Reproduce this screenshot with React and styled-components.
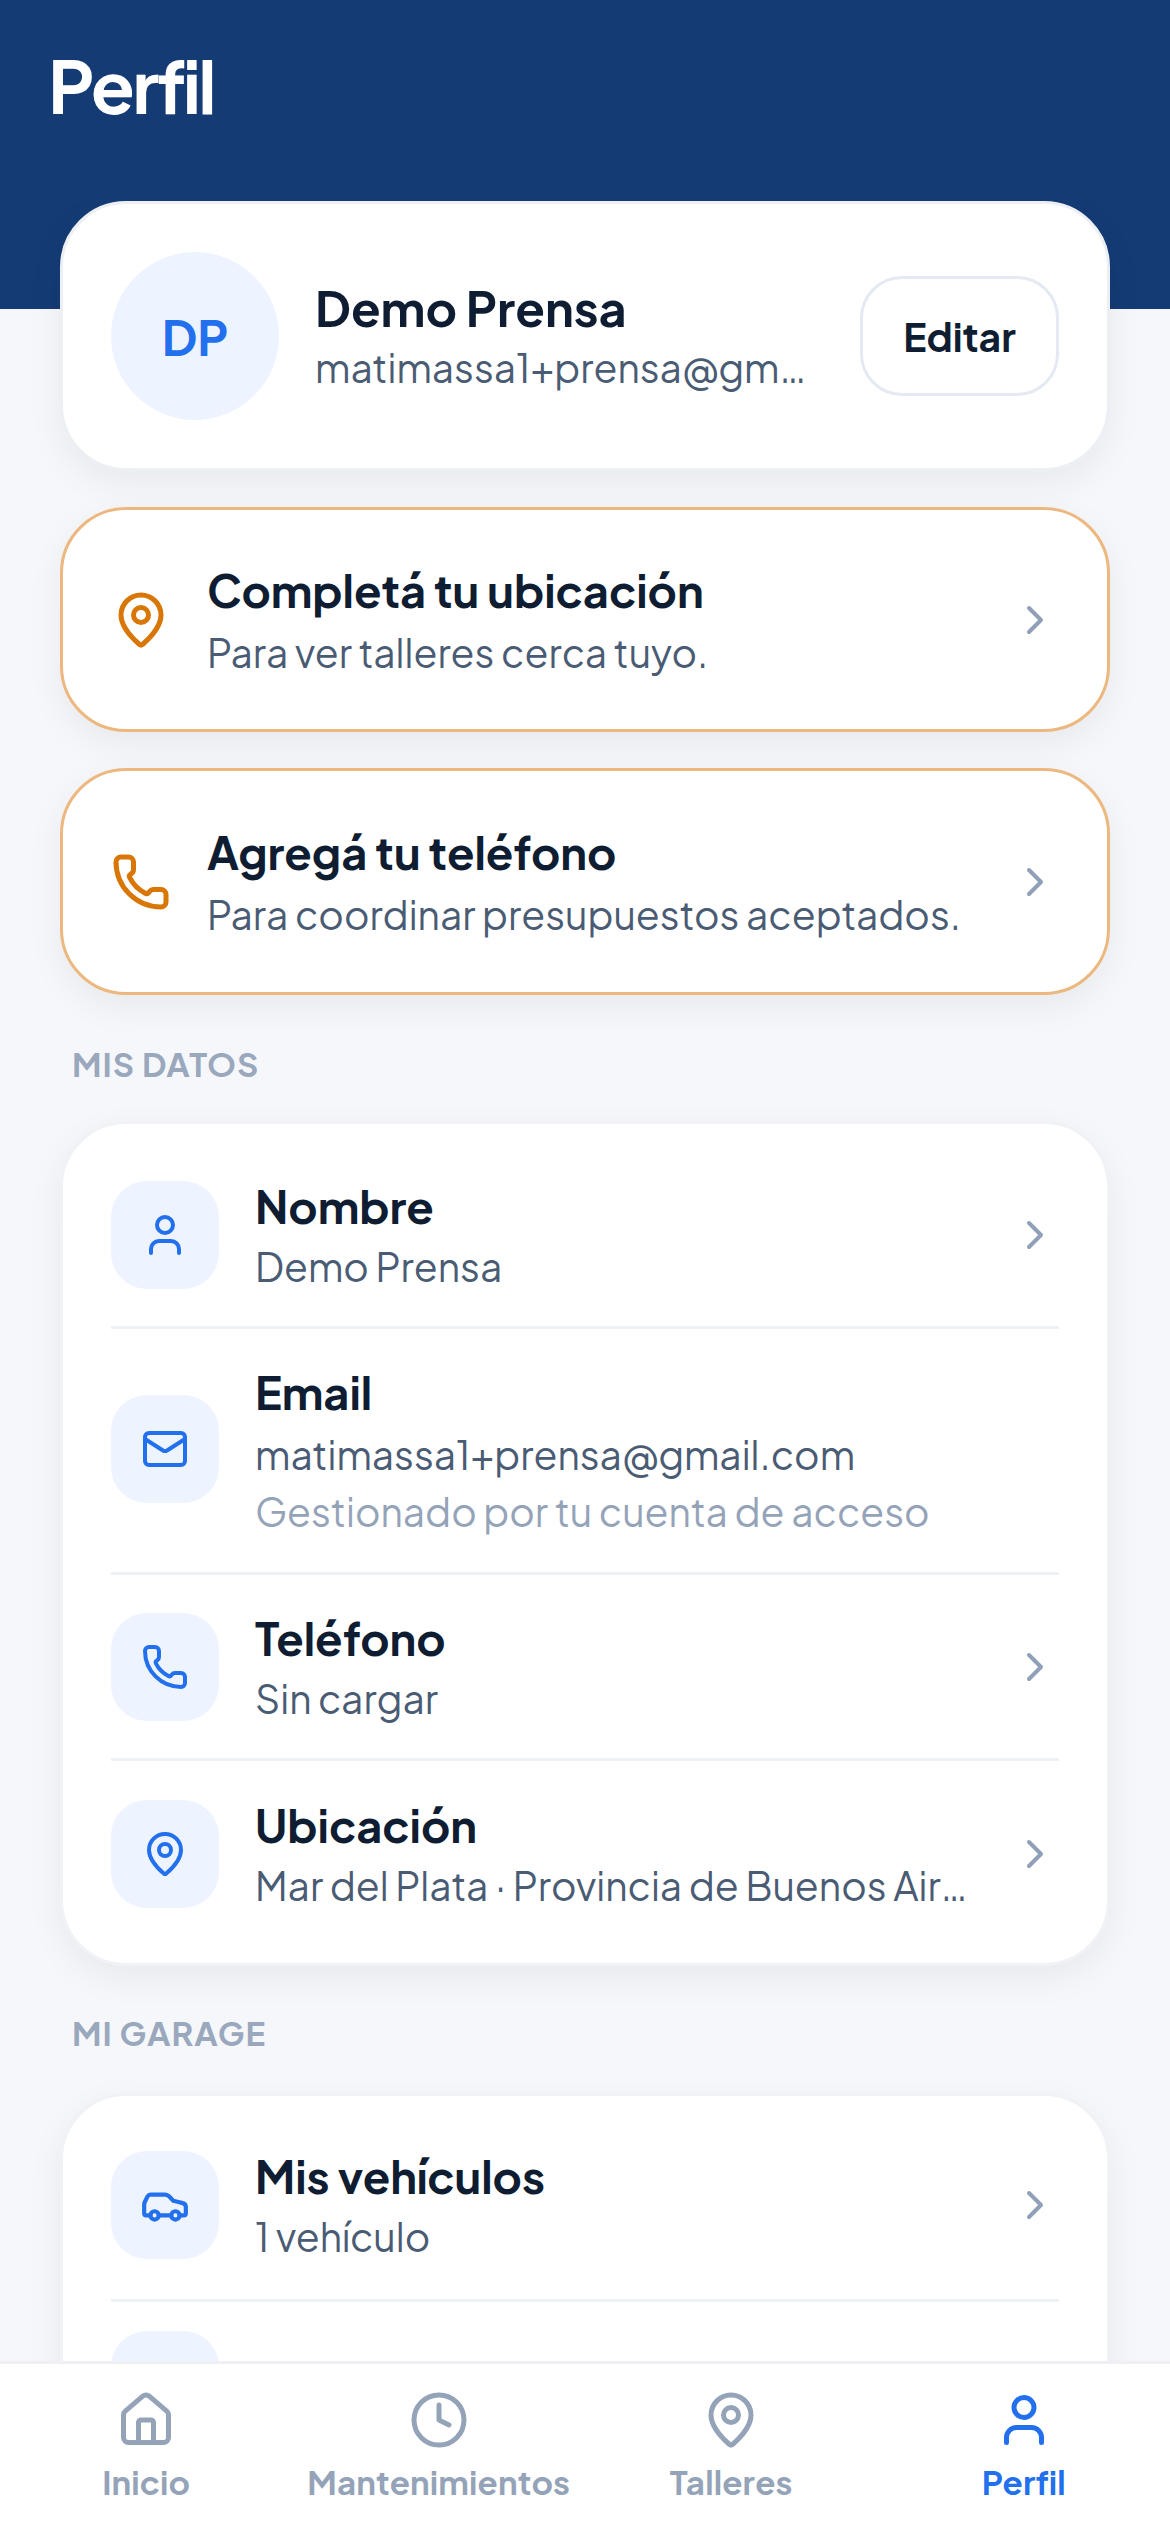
import React from 'react';
import styled, { createGlobalStyle } from 'styled-components';
import { ChevronRight, MapPin, Phone, User, Mail, Car, House, Clock } from 'lucide-react';

const GlobalStyle = createGlobalStyle`
  html, body { margin: 0; padding: 0; background: #f5f7fa; }
  body { font-family: "Plus Jakarta Sans", Inter, "Noto Sans", sans-serif; }
`;

const Screen = styled.div`
  position: relative;
  width: 1170px;
  height: 2532px;
  overflow: hidden;
  background: #f5f7fa;
  display: flex;
  flex-direction: column;
`;

const Hero = styled.header`
  height: 309px;
  flex: none;
  background: #153b75;
  padding: 42px 48px 0;
  box-sizing: border-box;
`;

const Title = styled.h1`
  margin: 0;
  font-size: 72px;
  line-height: 86px;
  font-weight: 700;
  letter-spacing: -2.5px;
  color: #fff;
`;

const Content = styled.main`
  flex: 1;
  min-height: 0;
  margin-top: -108px;
  padding: 0 60px;
  display: flex;
  flex-direction: column;
  overflow: hidden;
`;

const Card = styled.section`
  flex: none;
  background: #fff;
  border: 3px solid ${p => p.$accent ? '#ecb87f' : '#eceff4'};
  border-radius: 66px;
  box-shadow: 0 12px 36px rgba(15, 23, 42, 0.06);
`;

const ProfileCard = styled(Card)`
  height: 270px;
  box-sizing: border-box;
  padding: 0 48px;
  display: flex;
  align-items: center;
  gap: 36px;
  margin-bottom: 36px;
`;

const Avatar = styled.div`
  flex: none;
  width: 168px;
  height: 168px;
  border-radius: 50%;
  background: #edf3ff;
  color: #2270ed;
  display: flex;
  align-items: center;
  justify-content: center;
  font-size: 48px;
  font-weight: 700;
`;

const Info = styled.div`
  flex: 1;
  min-width: 0;
`;

const Name = styled.div`
  font-size: ${p => p.$large ? 48.5 : 45}px;
  line-height: 60px;
  font-weight: 700;
  color: #0f1d32;
`;

const Sub = styled.div`
  font-size: 39px;
  line-height: 54px;
  margin-top: ${p => p.$gap}px;
  color: ${p => p.$note ? '#94a3b8' : '#4a5b74'};
  white-space: nowrap;
  overflow: hidden;
  text-overflow: ellipsis;
`;

const EditButton = styled.button`
  flex: none;
  width: 199px;
  height: 120px;
  padding: 0;
  border: 3px solid #e4e9f2;
  border-radius: 42px;
  background: #fff;
  font: 700 39px "Plus Jakarta Sans", Inter, sans-serif;
  color: #0f1d32;
`;

const AlertCard = styled(Card)`
  height: ${p => p.$h}px;
  box-sizing: border-box;
  padding: 0 48px;
  display: flex;
  align-items: center;
  gap: 36px;
  margin-bottom: 36px;
  color: #d97706;
`;

const SectionLabel = styled.div`
  flex: none;
  height: 54px;
  line-height: 54px;
  padding-left: 12px;
  font-size: 33px;
  letter-spacing: 1px;
  font-weight: 700;
  color: #9aa8bd;
  margin: ${p => p.$first ? '6px 0 30px' : '40px 0 33px'};
`;

const ListCard = styled(Card)`
  padding: ${p => p.$top}px 48px 16px;
  border-color: #f0f2f6;
`;

const Row = styled.div`
  display: flex;
  align-items: center;
  gap: 36px;
  padding: 29px 0;
  min-height: ${p => p.$h}px;
  box-sizing: border-box;
  border-top: ${p => p.$first ? 'none' : '3px solid #eef1f5'};
`;

const IconBox = styled.div`
  flex: none;
  width: 108px;
  height: 108px;
  margin-bottom: ${p => p.$lift ? 3 : 0}px;
  border-radius: 36px;
  background: #edf3ff;
  color: #2270ed;
  display: flex;
  align-items: center;
  justify-content: center;
`;

const Chevron = styled(ChevronRight)`
  flex: none;
  width: 48px;
  height: 48px;
  color: #8fa0b8;
  margin-left: 6px;
`;

const ChevronSpace = styled.div`
  flex: none;
  width: 54px;
`;

const Nav = styled.nav`
  position: absolute;
  left: 0;
  right: 0;
  bottom: 0;
  height: 171px;
  box-sizing: border-box;
  background: #fff;
  border-top: 3px solid #eef0f4;
  display: grid;
  grid-template-columns: repeat(4, 1fr);
`;

const NavItem = styled.div`
  display: flex;
  flex-direction: column;
  align-items: center;
  padding-top: 26px;
  color: ${p => p.$active ? '#2270ed' : '#94a3b8'};
  font-size: 33px;
  line-height: 44px;
  letter-spacing: 0.2px;
  font-weight: 700;
  gap: 10px;
`;

const rows = [
  { icon: User, title: 'Nombre', sub: 'Demo Prensa', chevron: true, h: 182 },
  { icon: Mail, title: 'Email', sub: 'matimassa1+prensa@gmail.com', note: 'Gestionado por tu cuenta de acceso', h: 246 },
  { icon: Phone, title: 'Teléfono', sub: 'Sin cargar', chevron: true, h: 186 },
  { icon: MapPin, title: 'Ubicación', sub: 'Mar del Plata · Provincia de Buenos Aires', chevron: true, h: 189 },
];

const navItems = [
  { icon: House, label: 'Inicio' },
  { icon: Clock, label: 'Mantenimientos' },
  { icon: MapPin, label: 'Talleres' },
  { icon: User, label: 'Perfil', active: true },
];

const ListRow = ({ icon: Icon, iconSize = 48, title, sub, note, chevron, first, h }) => (
  <Row $first={first} $h={h}>
    <IconBox $lift={!!note}><Icon size={iconSize} strokeWidth={2} /></IconBox>
    <Info>
      <Name>{title}</Name>
      <Sub $gap={note ? 6 : 4}>{sub}</Sub>
      {note && <Sub $note $gap={3}>{note}</Sub>}
    </Info>
    {chevron ? <Chevron strokeWidth={2} /> : <ChevronSpace />}
  </Row>
);

const App = () => (
  <Screen>
    <GlobalStyle />
    <Hero><Title>Perfil</Title></Hero>
    <Content>
      <ProfileCard>
        <Avatar>DP</Avatar>
        <Info>
          <Name $large>Demo Prensa</Name>
          <Sub $gap={3}>matimassa1+prensa@gmail.com</Sub>
        </Info>
        <EditButton>Editar</EditButton>
      </ProfileCard>
      <AlertCard $accent $h={225}>
        <MapPin size={60} strokeWidth={2} />
        <Info>
          <Name>Completá tu ubicación</Name>
          <Sub $gap={6}>Para ver talleres cerca tuyo.</Sub>
        </Info>
        <Chevron strokeWidth={2} />
      </AlertCard>
      <AlertCard $accent $h={227}>
        <Phone size={60} strokeWidth={2} />
        <Info>
          <Name>Agregá tu teléfono</Name>
          <Sub $gap={6}>Para coordinar presupuestos aceptados.</Sub>
        </Info>
        <Chevron strokeWidth={2} />
      </AlertCard>
      <SectionLabel $first>MIS DATOS</SectionLabel>
      <ListCard $top={20}>
        {rows.map((r, i) => <ListRow key={r.title} {...r} first={i === 0} />)}
      </ListCard>
      <SectionLabel>MI GARAGE</SectionLabel>
      <ListCard $top={15}>
        <ListRow first icon={Car} iconSize={50} title="Mis vehículos" sub="1 vehículo" chevron h={188} />
        <Row $h={166}><IconBox /></Row>
      </ListCard>
    </Content>
    <Nav>
      {navItems.map(({ icon: Icon, label, active }) => (
        <NavItem key={label} $active={active}>
          <Icon size={60} strokeWidth={2} />
          {label}
        </NavItem>
      ))}
    </Nav>
  </Screen>
);

export default App;
